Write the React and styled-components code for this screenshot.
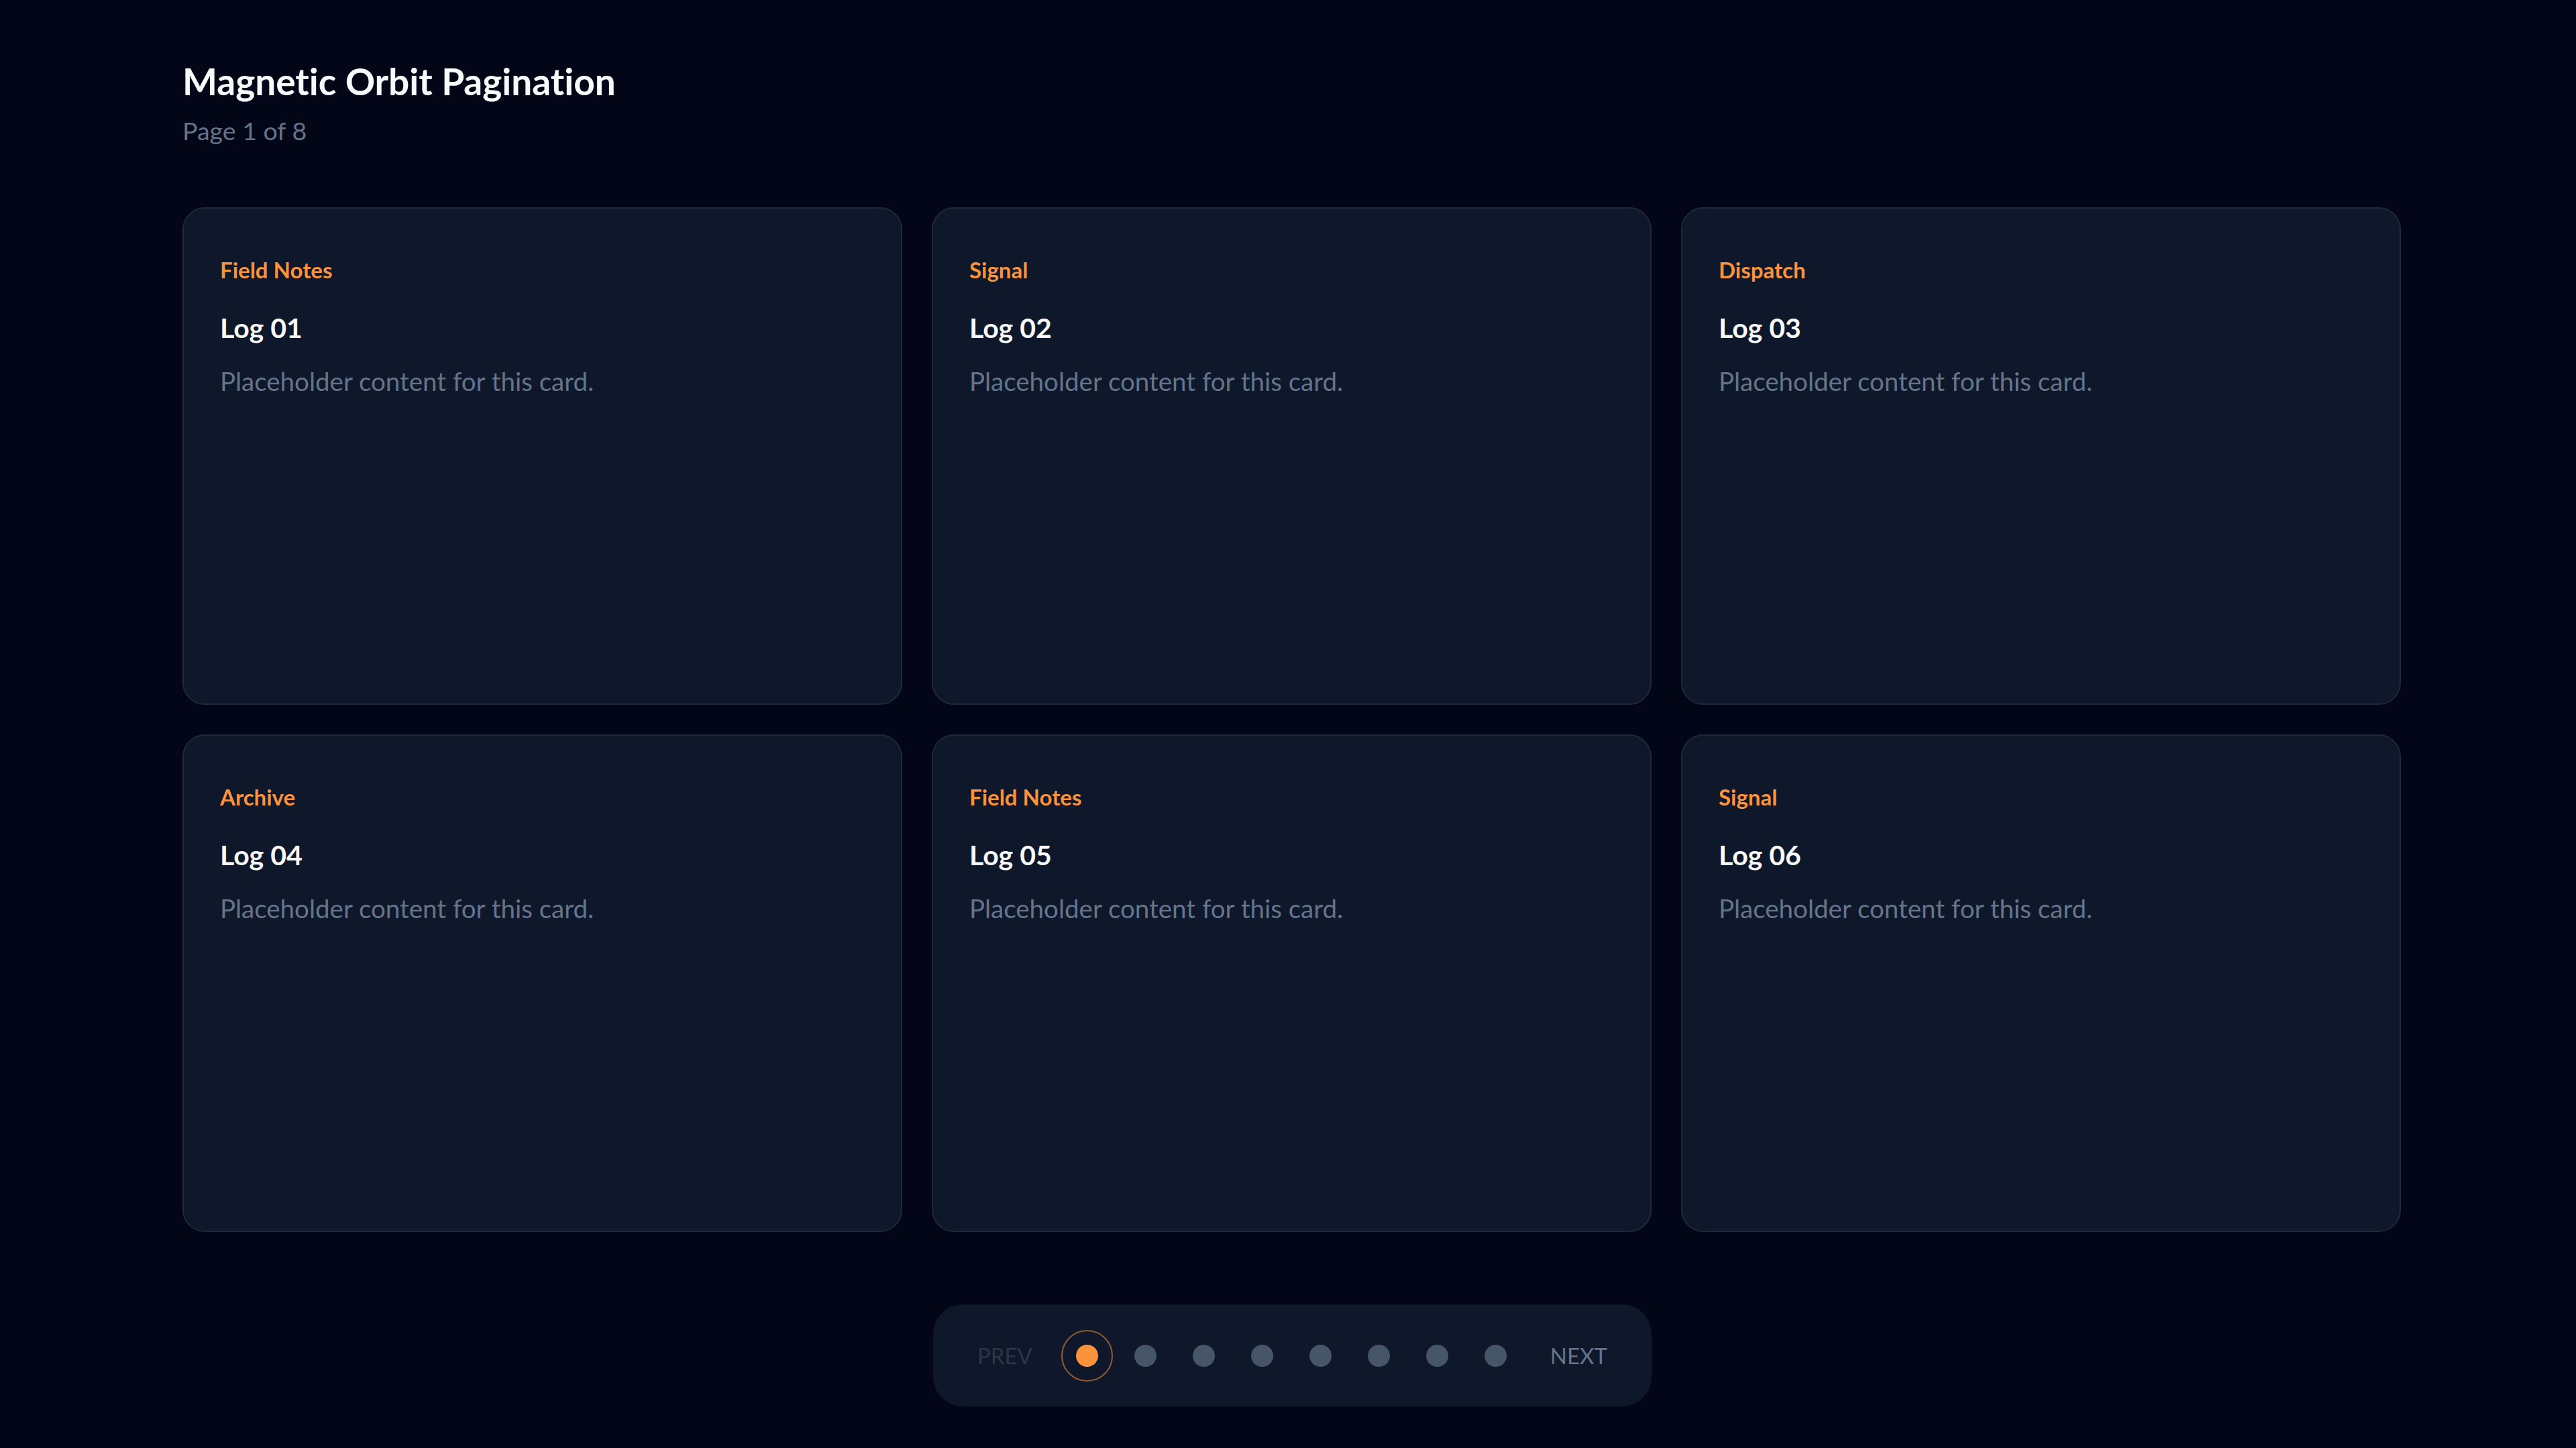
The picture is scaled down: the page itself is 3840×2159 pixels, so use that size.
import React from 'react';
import styled, { createGlobalStyle } from 'styled-components';

const GlobalStyle = createGlobalStyle`
  html, body {
    margin: 0;
    padding: 0;
    background: #020617;
  }
  body {
    font-family: Lato, "Noto Sans", sans-serif;
    font-variant-ligatures: none;
    color: #f8fafc;
  }
`

const Page = styled.div`
  min-height: 2159px;
  box-sizing: border-box;
  padding: 88px 259px 0 272px;
  background: #020617;
`

const Title = styled.h1`
  margin: 0;
  font-size: 55px;
  line-height: 66px;
  font-weight: 700;
  color: #f8fafc;
`

const Subtitle = styled.p`
  margin: 15px 0 0;
  font-size: 37.5px;
  line-height: 52px;
  color: #64748b;
`

const Grid = styled.div`
  margin-top: 88px;
  display: grid;
  grid-template-columns: repeat(3, 1073px);
  grid-auto-rows: 742px;
  gap: 44px;
`

const Card = styled.article`
  box-sizing: border-box;
  padding: 67px 54px;
  background: #0f172a;
  border: 2px solid #1e293b;
  border-radius: 33px;
  display: flex;
  flex-direction: column;
`

const Tag = styled.span`
  font-size: 33px;
  line-height: 49.5px;
  font-weight: 700;
  color: #fb923c;
`

const CardTitle = styled.h2`
  margin: 32px 0 0;
  font-size: 41px;
  line-height: 57px;
  font-weight: 700;
  color: #f8fafc;
`

const CardText = styled.p`
  margin: 21px 0 0;
  font-size: 38.5px;
  line-height: 61.6px;
  color: #64748b;
`

const PagerWrap = styled.div`
  margin-top: 108px;
  display: flex;
  justify-content: center;
`

const Pager = styled.nav`
  display: flex;
  align-items: center;
  gap: 10px;
  padding: 37.5px 33px;
  background: #0f172a;
  border-radius: 44px;
`

const PagerButton = styled.button`
  border: none;
  background: none;
  padding: 0 33px;
  font-family: Lato, "Noto Sans", sans-serif;
  font-size: 33px;
  line-height: 44px;
  color: ${p => (p.disabled ? '#2b3647' : '#64748b')};
  cursor: ${p => (p.disabled ? 'default' : 'pointer')};
`

const DotButton = styled.button`
  width: 77px;
  height: 77px;
  box-sizing: border-box;
  padding: 0;
  border-radius: 50%;
  background: none;
  border: 2px solid ${p => (p.$active ? 'rgba(251, 146, 60, 0.55)' : 'transparent')};
  display: flex;
  align-items: center;
  justify-content: center;
  cursor: pointer;
`

const Dot = styled.span`
  width: 33px;
  height: 33px;
  border-radius: 50%;
  background: ${p => (p.$active ? '#fb923c' : '#475569')};
`

const cards = [
  { tag: 'Field Notes', title: 'Log 01' },
  { tag: 'Signal', title: 'Log 02' },
  { tag: 'Dispatch', title: 'Log 03' },
  { tag: 'Archive', title: 'Log 04' },
  { tag: 'Field Notes', title: 'Log 05' },
  { tag: 'Signal', title: 'Log 06' },
];

const TOTAL = 8;

export default function App() {
  const [page, setPage] = React.useState(1);

  return (
    <Page>
      <GlobalStyle />
      <header>
        <Title>Magnetic Orbit Pagination</Title>
        <Subtitle>Page {page} of {TOTAL}</Subtitle>
      </header>
      <Grid>
        {cards.map(c => (
          <Card key={c.title}>
            <Tag>{c.tag}</Tag>
            <CardTitle>{c.title}</CardTitle>
            <CardText>Placeholder content for this card.</CardText>
          </Card>
        ))}
      </Grid>
      <PagerWrap>
        <Pager>
          <PagerButton disabled={page === 1} onClick={() => setPage(page - 1)}>PREV</PagerButton>
          {Array.from({ length: TOTAL }, (_, i) => (
            <DotButton key={i} $active={page === i + 1} onClick={() => setPage(i + 1)} aria-label={`Page ${i + 1}`}>
              <Dot $active={page === i + 1} />
            </DotButton>
          ))}
          <PagerButton disabled={page === TOTAL} onClick={() => setPage(page + 1)}>NEXT</PagerButton>
        </Pager>
      </PagerWrap>
    </Page>
  );
}
